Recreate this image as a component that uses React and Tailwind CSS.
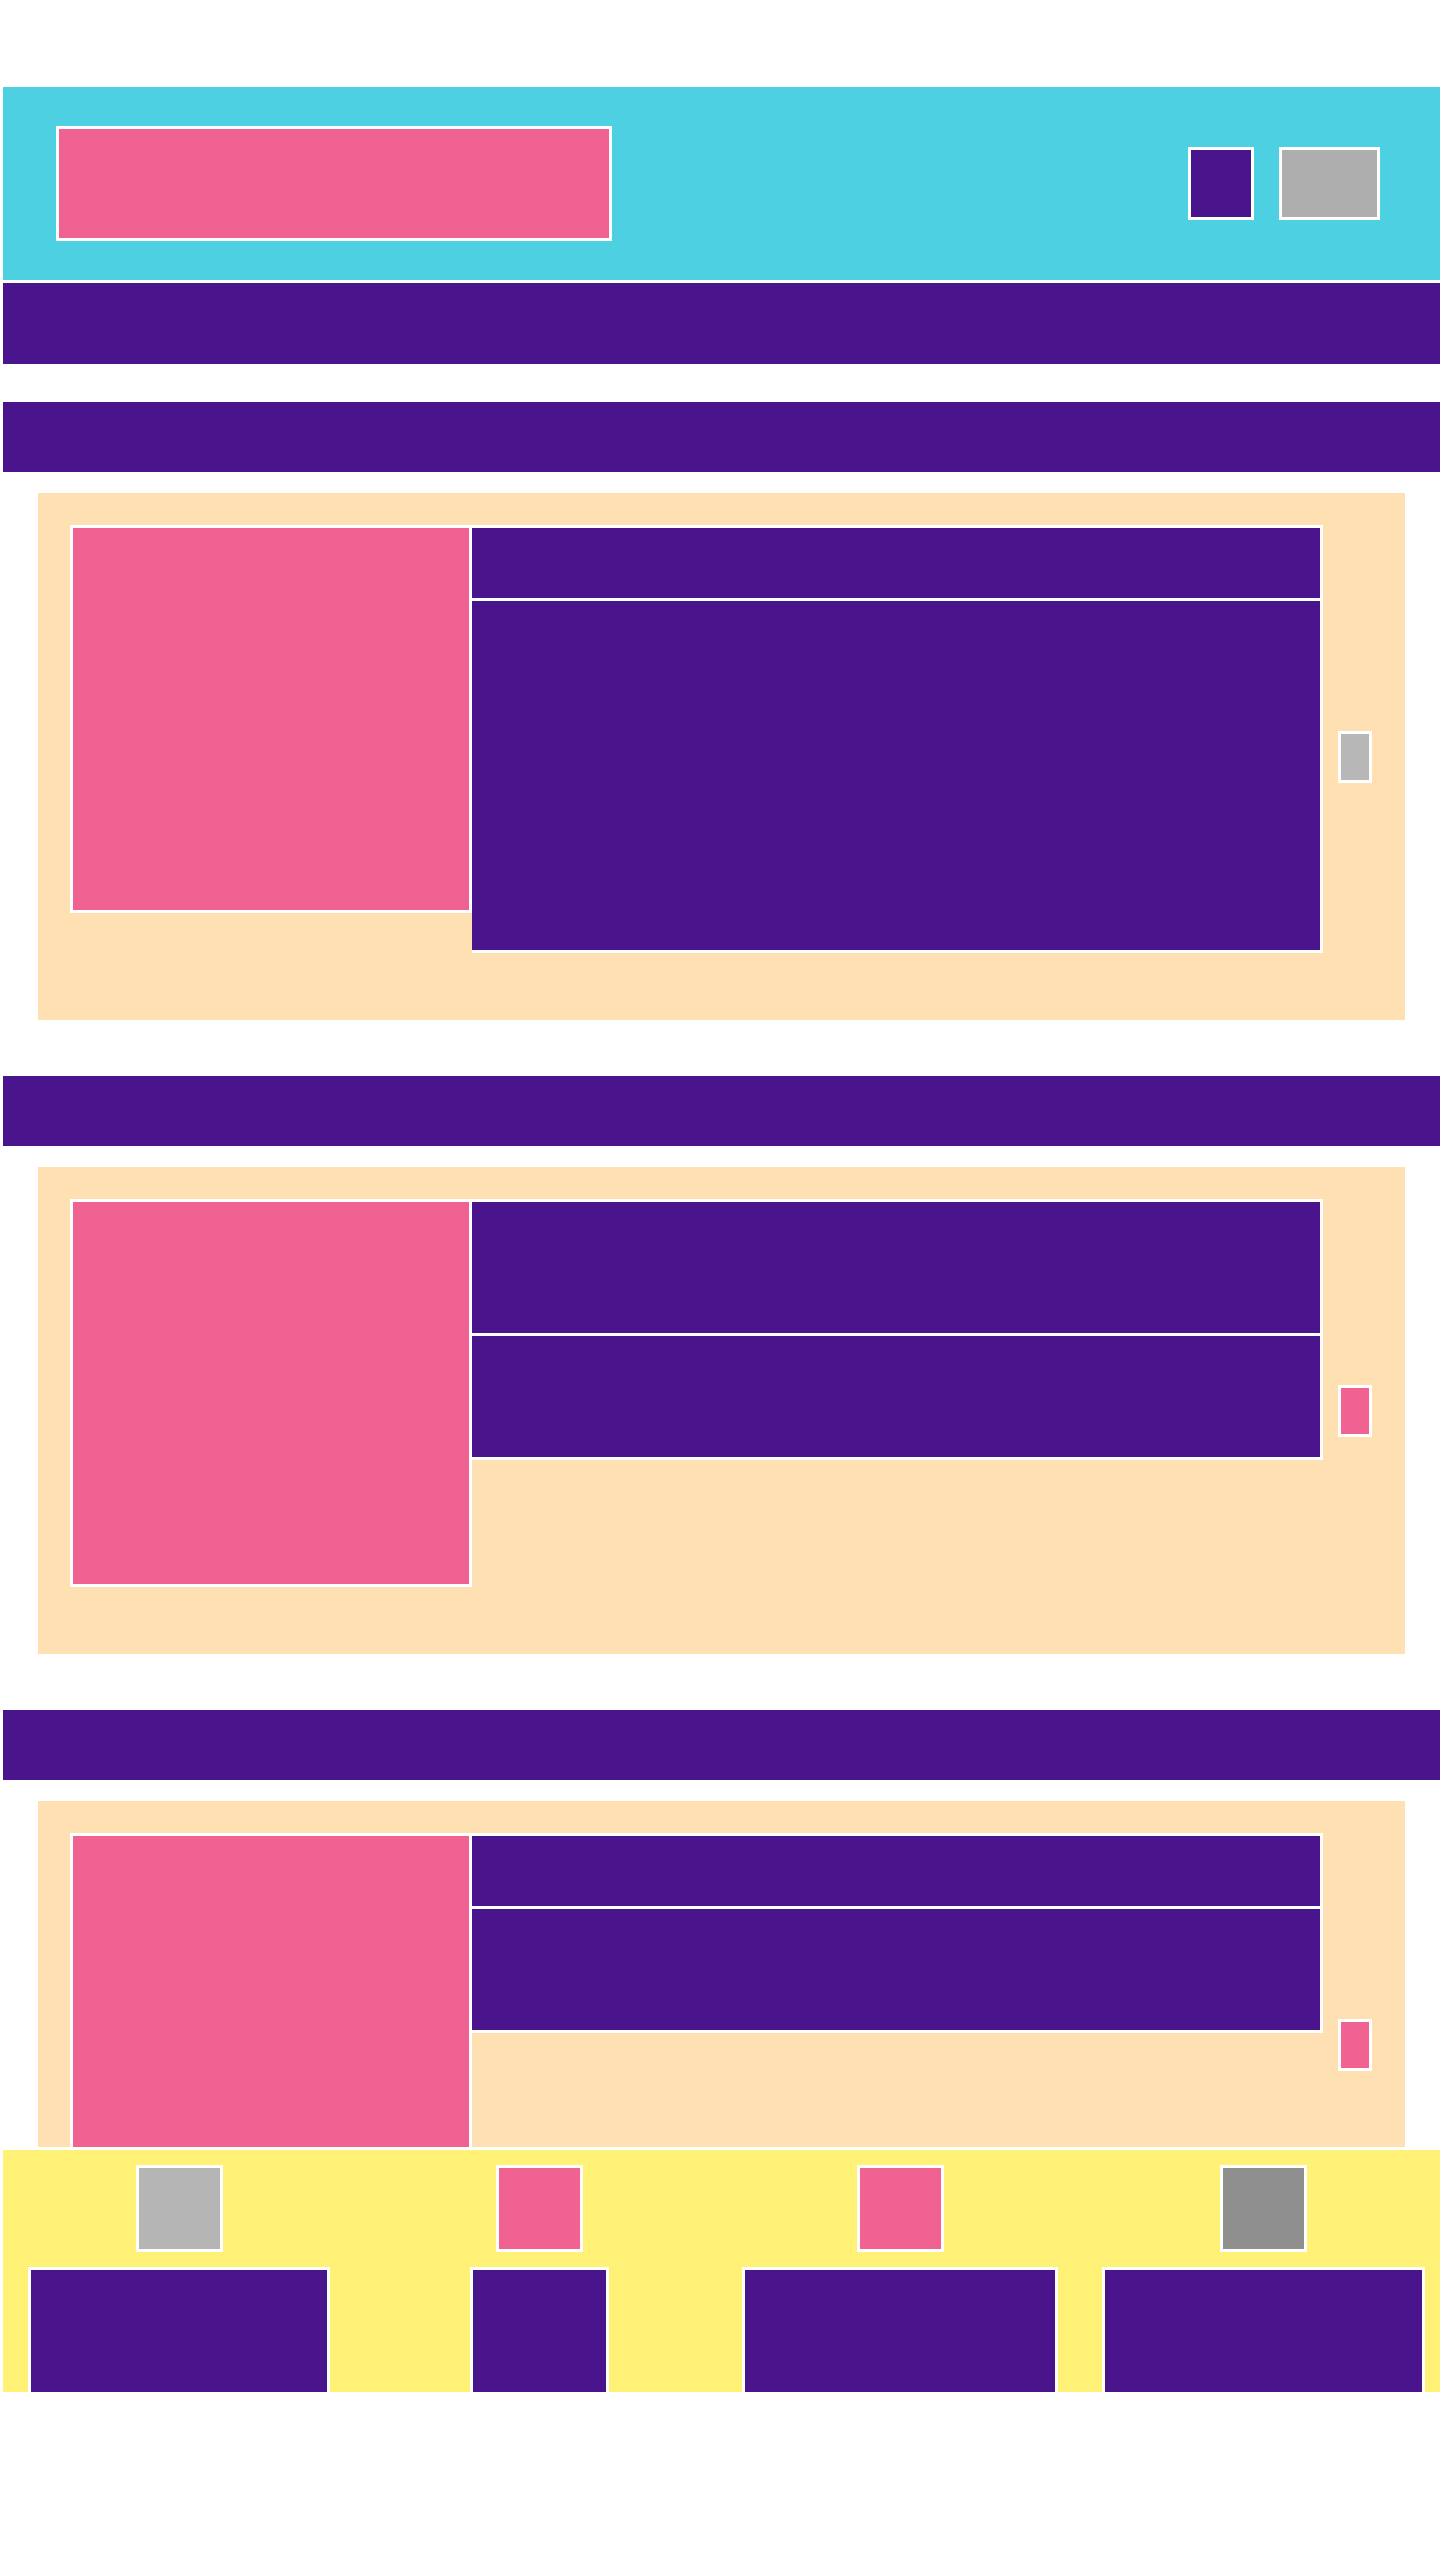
const cards = [
  { title: "h-[70px]", desc: "h-[352px]", button: "bg-[#b7b7b7]" },
  { title: "h-[131px]", desc: "h-[124px]", button: "bg-[#f06292]" },
  { title: "h-[70px]", desc: "h-[124px]", button: "bg-[#f06292]" },
];

const footerCols = [
  { icon: "bg-[#b5b5b5]", block: "w-[302px]", gap: "ml-[25px]" },
  { icon: "bg-[#f06292]", block: "w-[139px]", gap: "ml-[140px]" },
  { icon: "bg-[#f06292]", block: "w-[316px]", gap: "ml-[133px]" },
  { icon: "bg-[#8f8f8f]", block: "w-[323px]", gap: "ml-[44px]" },
];

function Card({ card }) {
  return (
    <div className="mx-[35px] mt-[21px] bg-[#ffe0b2] flex items-center px-8">
      <div className="flex items-start pt-8 pb-[67px]">
        <div className="w-[402px] h-[388px] shrink-0 bg-[#f06292] border-[3px] border-white" />
        <div className="w-[851px] shrink-0 flex flex-col border-[3px] border-l-0 border-white">
          <div className={`${card.title} bg-[#4a148c]`} />
          <div className={`${card.desc} bg-[#4a148c] border-t-[3px] border-white`} />
        </div>
      </div>
      <div className={`ml-[15px] w-[34px] h-[52px] shrink-0 border-[3px] border-white ${card.button}`} />
    </div>
  );
}

export default function App() {
  return (
    <div className="min-h-[2560px] bg-white pt-[87px] pl-[3px] font-['Liberation_Sans',sans-serif]">
      <header className="h-[196px] bg-[#4dd0e1] border-b-[3px] border-white flex items-center justify-between pl-[53px] pr-[60px]">
        <div className="w-[556px] h-[115px] bg-[#f06292] border-[3px] border-white" />
        <div className="flex items-center gap-[25px]">
          <div className="w-[66px] h-[73px] bg-[#4a148c] border-[3px] border-white" />
          <div className="w-[101px] h-[73px] bg-[#aeaeae] border-[3px] border-white" />
        </div>
      </header>

      <nav className="h-[81px] bg-[#4a148c]" />

      <main className="h-[1783px] overflow-hidden pt-[38px]">
        {cards.map((card, i) => (
          <section key={i} className="mb-[56px]">
            <div className="h-[70px] bg-[#4a148c]" />
            <Card card={card} />
          </section>
        ))}
      </main>

      <footer className="h-[245px] overflow-hidden border-t-[3px] border-white bg-[#fff176] pt-[15px] flex items-start">
        {footerCols.map((col, i) => (
          <div key={i} className={`${col.gap} ${col.block} shrink-0 flex flex-col items-center gap-[15px]`}>
            <div className={`w-[87px] h-[87px] border-[3px] border-white ${col.icon}`} />
            <div className={`${col.block} h-[140px] bg-[#4a148c] border-[3px] border-white`} />
          </div>
        ))}
      </footer>
    </div>
  );
}
